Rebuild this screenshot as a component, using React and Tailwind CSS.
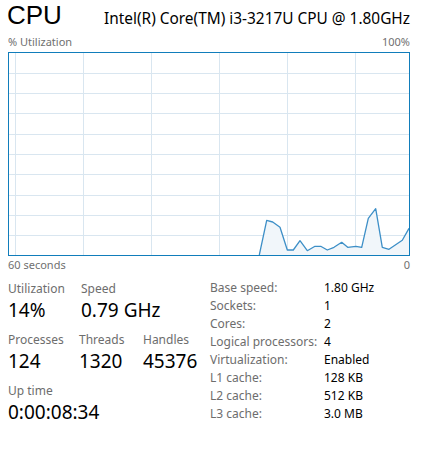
const points = [
  [250.3, 202], [257.7, 167.3], [263.7, 169], [271, 174.3], [278.3, 197],
  [284.3, 197], [291, 187.7], [298.3, 197.7], [306, 193.3], [311.7, 193.3],
  [318.3, 197], [325, 194.3], [332.7, 189.3], [338.7, 194.3], [347, 193.3],
  [352.7, 194.3], [359.3, 165.3], [366.7, 155.7], [373.3, 194.3], [380, 196.3],
  [393.3, 187.3], [400, 175.3],
];

const vLines = [6.5, 74.5, 142.5, 210.5, 278.5, 346.5];
const hLines = [20.5, 40.5, 60.5, 81.5, 101.5, 121.5, 142.5, 162.5, 182.5];

const specs = [
  ["Base speed:", "1.80 GHz"],
  ["Sockets:", "1"],
  ["Cores:", "2"],
  ["Logical processors:", "4"],
  ["Virtualization:", "Enabled"],
  ["L1 cache:", "128 KB"],
  ["L2 cache:", "512 KB"],
  ["L3 cache:", "3.0 MB"],
];

const UsageGraph = () => {
  const line = points.map((p) => p.join(",")).join(" ");
  const area = `${line} 400,202 250.3,202`;
  return (
    <div className="border border-[#117dbb] h-[204px]">
      <svg width="400" height="202" viewBox="0 0 400 202" className="block">
        {vLines.map((x) => (
          <line key={x} x1={x} y1="0" x2={x} y2="202" stroke="#d9e6f0" strokeWidth="1" />
        ))}
        {hLines.map((y) => (
          <line key={y} x1="0" y1={y} x2="400" y2={y} stroke="#d9e6f0" strokeWidth="1" />
        ))}
        <polygon points={area} fill="#f1f6fa" />
        <polyline points={line} fill="none" stroke="#3d8fc7" strokeWidth="1.3" strokeLinejoin="round" />
      </svg>
    </div>
  );
};

const Stat = ({ label, value, width }) => (
  <div className={width}>
    <div className="text-[12px] leading-[16px] text-[#6d6d6d]">{label}</div>
    <div className="text-[19px] leading-[26px] text-black">{value}</div>
  </div>
);

export default function App() {
  return (
    <div className="w-[426px] h-[462px] bg-white pl-2 pr-4 font-['Noto_Sans',sans-serif] text-black">
      {/* header */}
      <div className="flex items-start justify-between h-[30px]">
        <div className="font-['Liberation_Sans',sans-serif] text-[26px] leading-[30px] ml-[-1px]">CPU</div>
        <div className="text-[15.4px] leading-[22px] mt-[8px]">Intel(R) Core(TM) i3-3217U CPU @ 1.80GHz</div>
      </div>

      <div className="flex justify-between text-[11px] leading-[14px] text-[#707070] mt-[5px] mb-[3px]">
        <span>% Utilization</span>
        <span>100%</span>
      </div>

      <UsageGraph />

      <div className="flex justify-between text-[11px] leading-[14px] text-[#707070] mt-[2px]">
        <span>60 seconds</span>
        <span>0</span>
      </div>

      {/* stats */}
      <div className="flex mt-[9px]">
        <div className="w-[202px] flex flex-col gap-[9px]">
          <div className="flex">
            <Stat label="Utilization" value="14%" width="w-[73px]" />
            <Stat label="Speed" value="0.79 GHz" width="w-[100px]" />
          </div>
          <div className="flex">
            <Stat label="Processes" value="124" width="w-[71px]" />
            <Stat label="Threads" value="1320" width="w-[64px]" />
            <Stat label="Handles" value="45376" width="w-[60px]" />
          </div>
          <div className="flex">
            <Stat label="Up time" value="0:00:08:34" width="w-[120px]" />
          </div>
        </div>
        <div className="flex flex-col text-[12px] leading-[18px] -mt-[2px]">
          {specs.map(([k, v]) => (
            <div key={k} className="flex">
              <span className="w-[114px] text-[#6d6d6d]">{k}</span>
              <span>{v}</span>
            </div>
          ))}
        </div>
      </div>
    </div>
  );
}
